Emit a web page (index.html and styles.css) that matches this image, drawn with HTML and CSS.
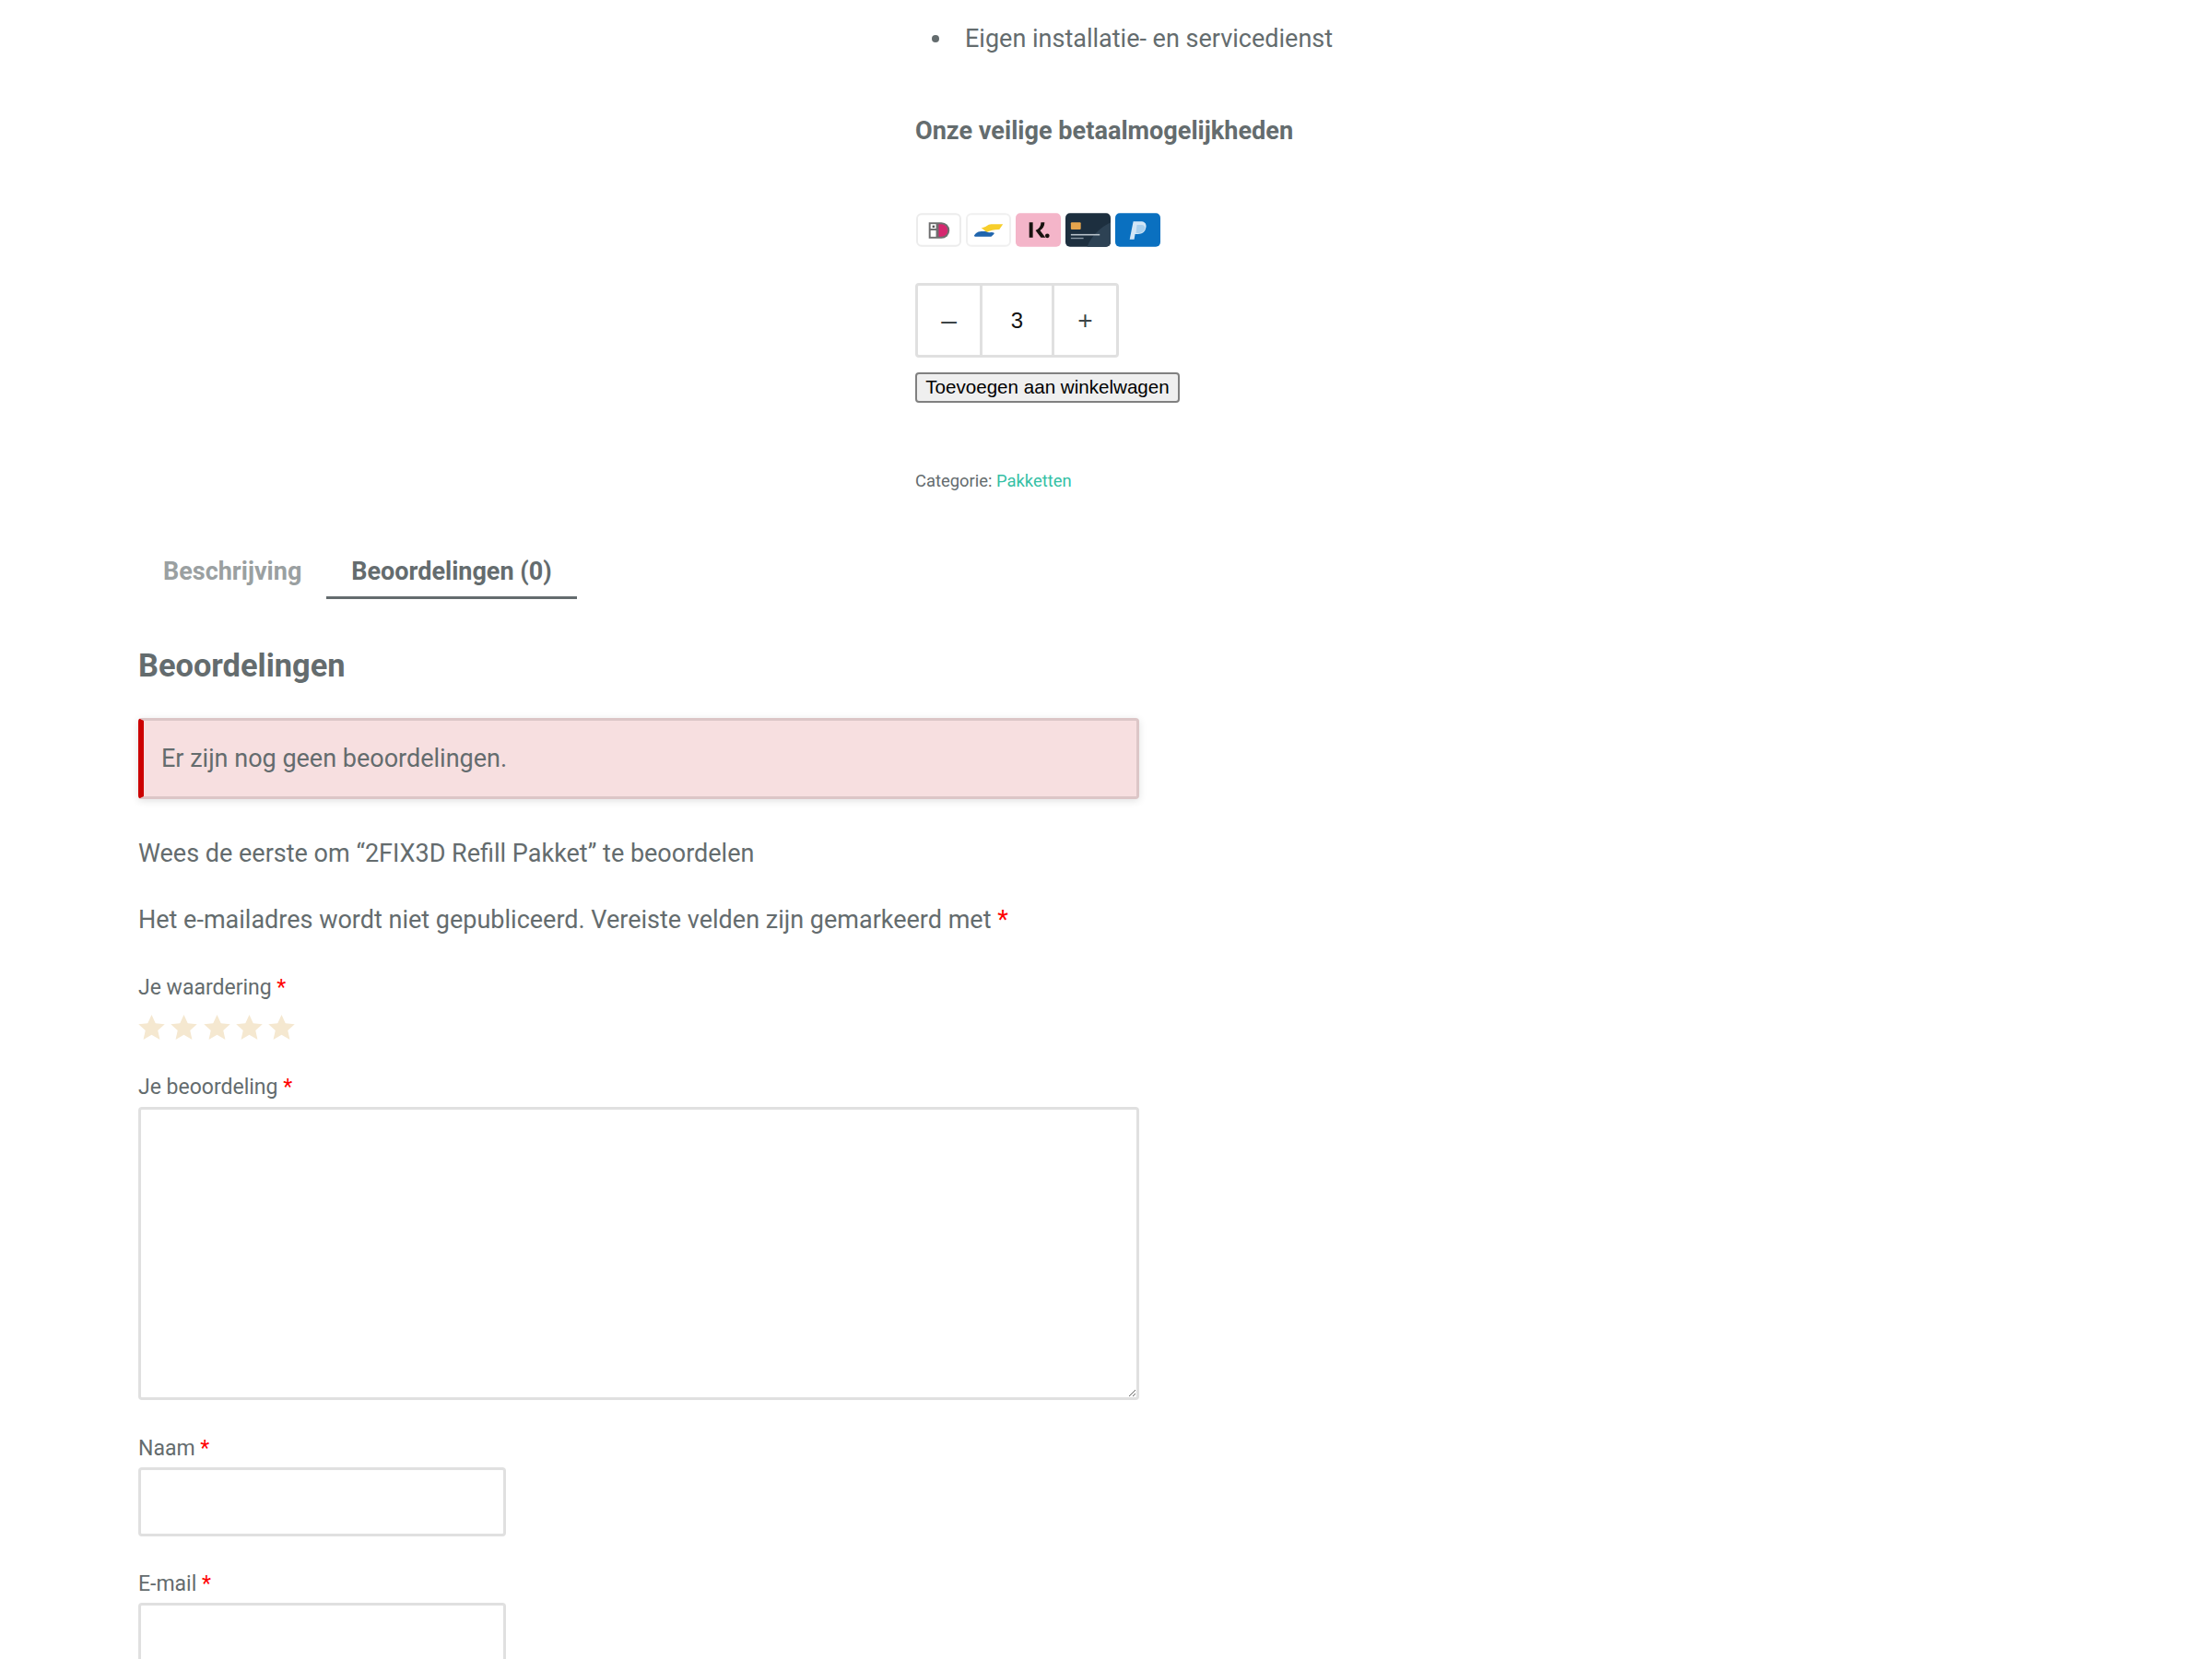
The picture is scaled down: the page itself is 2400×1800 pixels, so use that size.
FILE: index.html
```html
<!DOCTYPE html>
<html lang="nl">
<head>
<meta charset="utf-8">
<title>2FIX3D Refill Pakket</title>
<link rel="stylesheet" href="styles.css">
</head>
<body>
<main class="page">
  <section class="summary">
    <ul class="usps">
      <li>Eigen installatie- en servicedienst</li>
    </ul>
    <h4 class="pay-title">Onze veilige betaalmogelijkheden</h4>
    <div class="pay-icons">
      <svg class="pay" viewBox="0 0 50 37"><rect x="1" y="1" width="48" height="35" rx="5" fill="#fff" stroke="#ececec" stroke-width="2"/><path d="M14 10h14a9 9 0 0 1 0 18H14z" fill="#6f6f70"/><path d="M25 12h3a7 7 0 0 1 0 14h-3z" fill="#d5286f"/><rect x="16" y="19" width="6" height="7" fill="#fff"/><rect x="16" y="12" width="6" height="5" fill="#fff"/><rect x="18" y="13.5" width="2.5" height="2.5" fill="#555"/></svg>
      <svg class="pay" viewBox="0 0 50 37"><rect x="1" y="1" width="48" height="35" rx="5" fill="#fff" stroke="#f0f0f0" stroke-width="2"/><path d="M17 16c5 0 7-4 11-4h13l-4 6c-6 0-10 1-14 3z" fill="#f7ce2b"/><path d="M9 25c3-5 6-5 12-5 3 0 2 2 7 1 3 0 4 1 3 2l-3 3H10z" fill="#1f65ad"/></svg>
      <svg class="pay" viewBox="0 0 50 37"><rect width="50" height="37" rx="5" fill="#f4b5c9"/><path d="M15 10h4v17h-4zM28 10h4c0 4-2 7-5 9l6 8h-5l-6-8c4-2 6-5 6-9z" fill="#17120f"/><circle cx="35" cy="25" r="2.4" fill="#17120f"/></svg>
      <svg class="pay" viewBox="0 0 50 37"><rect width="50" height="37" rx="5" fill="#1d2f3f"/><path d="M24 37C30 22 42 14 50 10v22a5 5 0 0 1-5 5z" fill="#2d4254"/><rect x="6" y="10" width="11" height="8" rx="1" fill="#e5a44d"/><rect x="6" y="23" width="32" height="1.6" fill="#b9c3cb"/><rect x="6" y="27" width="14" height="1.4" fill="#8d9aa5"/></svg>
      <svg class="pay" viewBox="0 0 50 37"><rect width="50" height="37" rx="5" fill="#0a70c0"/><path d="M20 9h8c5 0 7 3 6 7-1 5-4 7-9 7h-3l-1 6h-5z" fill="#d3e6f6"/><path d="M24 13h5c3 0 4 2 4 4-1 3-3 5-7 5h-3z" fill="#a9d0ee"/></svg>
    </div>
    <form class="cart">
      <div class="qty">
        <span class="qty-btn qty-minus">–</span>
        <span class="qty-val">3</span>
        <span class="qty-btn qty-plus">+</span>
      </div>
      <button class="add" type="button">Toevoegen aan winkelwagen</button>
    </form>
    <p class="meta">Categorie: <a href="#">Pakketten</a></p>
  </section>

  <section class="tabs-area">
    <nav class="tabs">
      <a class="tab" href="#">Beschrijving</a>
      <a class="tab active" href="#">Beoordelingen (0)</a>
    </nav>
    <h2 class="rev-title">Beoordelingen</h2>
    <div class="notice">Er zijn nog geen beoordelingen.</div>
    <p class="lead first">Wees de eerste om “2FIX3D Refill Pakket” te beoordelen</p>
    <p class="lead second">Het e-mailadres wordt niet gepubliceerd. Vereiste velden zijn gemarkeerd met <span class="req">*</span></p>
    <div class="lbl rating-lbl">Je waardering <span class="req">*</span></div>
    <div class="stars">
      <svg viewBox="0 0 24 24"><path d="M12 .8l3.5 7.6 8.3.9-6.2 5.6 1.8 8.2L12 18.9l-7.4 4.2 1.8-8.2L.2 9.3l8.3-.9z"/></svg>
      <svg viewBox="0 0 24 24"><path d="M12 .8l3.5 7.6 8.3.9-6.2 5.6 1.8 8.2L12 18.9l-7.4 4.2 1.8-8.2L.2 9.3l8.3-.9z"/></svg>
      <svg viewBox="0 0 24 24"><path d="M12 .8l3.5 7.6 8.3.9-6.2 5.6 1.8 8.2L12 18.9l-7.4 4.2 1.8-8.2L.2 9.3l8.3-.9z"/></svg>
      <svg viewBox="0 0 24 24"><path d="M12 .8l3.5 7.6 8.3.9-6.2 5.6 1.8 8.2L12 18.9l-7.4 4.2 1.8-8.2L.2 9.3l8.3-.9z"/></svg>
      <svg viewBox="0 0 24 24"><path d="M12 .8l3.5 7.6 8.3.9-6.2 5.6 1.8 8.2L12 18.9l-7.4 4.2 1.8-8.2L.2 9.3l8.3-.9z"/></svg>
    </div>
    <div class="lbl review-lbl">Je beoordeling <span class="req">*</span></div>
    <textarea class="area"></textarea>
    <div class="lbl name-lbl">Naam <span class="req">*</span></div>
    <input class="field" type="text">
    <div class="lbl mail-lbl">E-mail <span class="req">*</span></div>
    <input class="field" type="text">
  </section>
</main>
</body>
</html>
```
FILE: styles.css
```css
html, body { margin: 0; padding: 0; background: #fff; }
body { height: 1800px; overflow: hidden; font-family: Roboto, "Liberation Sans", sans-serif; color: #646c6e; }
.page { padding-left: 150px; }
.summary { padding-left: 843px; }
.usps { margin: 0; padding: 21px 0 0 18px; list-style: none; font-size: 27px; line-height: 42px; }
.usps li { display: flex; align-items: center; }
.usps li::before { content: ""; width: 8px; height: 8px; margin-right: 28px; border-radius: 50%; background: #646c6e; }
.pay-title { margin: 58px 0 0; font-size: 27.1px; line-height: 42px; font-weight: 700; }
.pay-icons { display: flex; align-items: center; margin: 67px 0 0 1px; height: 38px; width: 265px; justify-content: space-between; filter: blur(.5px); }
.pay { height: 37px; width: 49px; display: block; }
.cart { margin-top: 39px; }
.qty { display: flex; width: 221px; height: 81px; box-sizing: border-box; border: 3px solid #e0e0e0; border-radius: 4px; color: #3c4447; font-family: "Liberation Sans", sans-serif; }
.qty-btn, .qty-val { display: flex; align-items: center; justify-content: center; font-size: 24px; }
.qty-btn { width: 67px; }
.qty-minus { font-size: 30px; }
.qty-plus { font-size: 28px; }
.qty-val { width: 75px; border: solid #e0e0e0; border-width: 0 3px; color: #111; }
.add { display: block; margin: 16px 0 0; width: 287px; height: 33px; padding: 0; border: 2px solid #808080; border-radius: 4px; background: #efefef; color: #000; font: 20.6px/1 "Liberation Sans", sans-serif; }
.meta { margin: 71px 0 0; font-size: 18.4px; line-height: 28px; }
.meta a { color: #35bfa5; text-decoration: none; }
.tabs-area { margin-top: 58px; }
.tabs { display: flex; height: 64px; }
.tab { padding: 0 27px; font-size: 27px; line-height: 53px; font-weight: 700; text-decoration: none; color: #9aa0a1; }
.tab.active { color: #646c6e; height: 53px; border-bottom: 3px solid #646c6e; }
.rev-title { margin: 43px 0 0; font-size: 34.4px; line-height: 42px; font-weight: 700; }
.notice { box-sizing: border-box; width: 1086px; height: 88px; margin-top: 36px; padding-left: 19px; display: flex; align-items: center; background: #f7dfe0; border: 3px solid #dcc6c7; border-left: 6px solid #cc0000; border-radius: 4px; box-shadow: 0 2px 8px rgba(0,0,0,.12); font-size: 27px; }
.lead { margin: 0; font-size: 27px; line-height: 40px; }
.lead.first { margin-top: 39px; }
.lead.second { margin-top: 32px; }
.req { color: #f00; }
.lbl { font-size: 23px; line-height: 32px; }
.rating-lbl { margin-top: 38px; }
.stars { display: flex; gap: 6.3px; margin-top: 12px; height: 30px; }
.stars svg { width: 29px; height: 29px; fill: #f5e8d0; display: block; }
.review-lbl { margin-top: 34px; }
.area { display: block; box-sizing: border-box; width: 1086px; height: 318px; margin: 5px 0 0; border: 3px solid #e0e0e0; border-radius: 4px; background: #fff; padding: 0; }
.name-lbl { margin-top: 37px; }
.field { display: block; box-sizing: border-box; width: 399px; height: 75px; margin: 4px 0 0; border: 3px solid #e0e0e0; border-radius: 4px; background: #fff; padding: 0; }
.mail-lbl { margin-top: 36px; }
```
